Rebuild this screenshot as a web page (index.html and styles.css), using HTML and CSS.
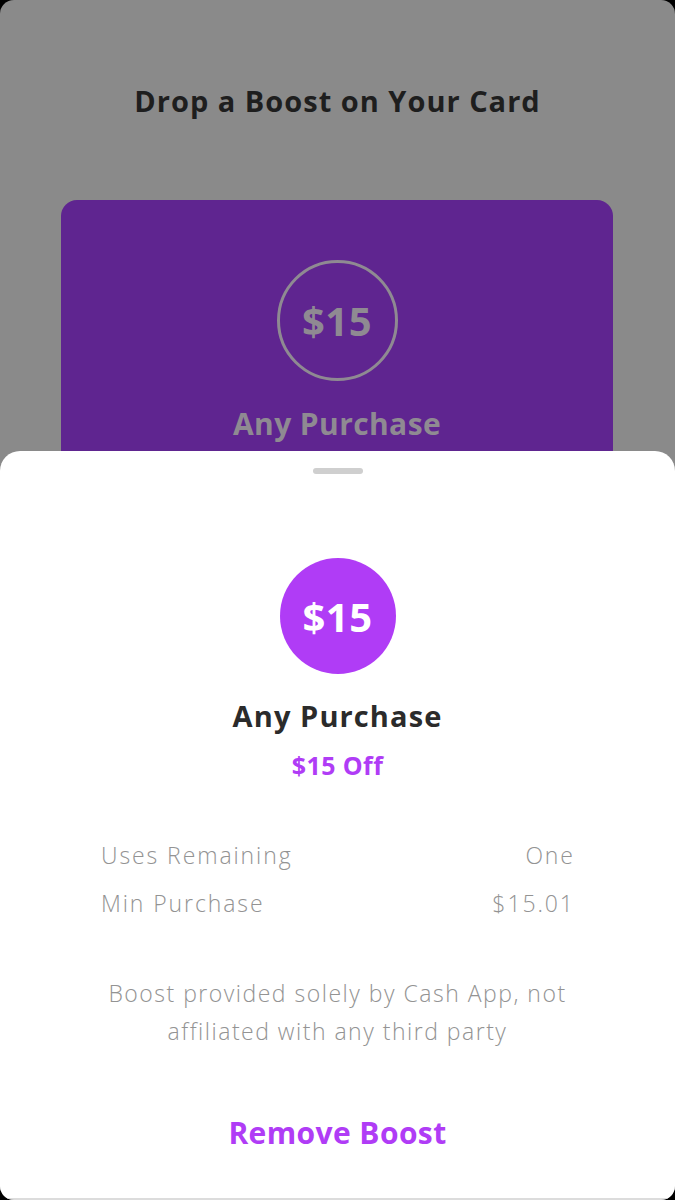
FILE: index.html
```html
<!DOCTYPE html>
<html>
<head>
<meta charset="utf-8">
<link rel="stylesheet" href="styles.css">
</head>
<body>
<div class="screen">
  <h1 class="title">Drop a Boost on Your Card</h1>
  <div class="card">
    <div class="card-circle">$15</div>
    <div class="card-label">Any Purchase</div>
  </div>
  <div class="sheet">
    <div class="handle"></div>
    <div class="badge">$15</div>
    <div class="name">Any Purchase</div>
    <div class="off">$15 Off</div>
    <div class="rows">
      <div class="row"><span>Uses Remaining</span><span>One</span></div>
      <div class="row"><span>Min Purchase</span><span>$15.01</span></div>
    </div>
    <p class="note">Boost provided solely by Cash App, not<br>affiliated with any third party</p>
    <div class="remove">Remove Boost</div>
  </div>
</div>
</body>
</html>
```
FILE: styles.css
```css
html, body {
  margin: 0;
  padding: 0;
  background: #000;
}
.screen {
  position: relative;
  width: 675px;
  height: 1200px;
  background: #8a8a8a;
  border-radius: 14px;
  overflow: hidden;
  font-family: "Open Sans", Lato, sans-serif;
}
.title {
  margin: 0;
  padding-top: 83px;
  font-size: 29px;
  line-height: 36px;
  font-weight: 700;
  letter-spacing: 1px;
  color: #1e1e1e;
  text-align: center;
}
.card {
  margin: 81px 0 0 61px;
  width: 552px;
  height: 420px;
  background: #5f2590;
  border-radius: 16px;
  padding-top: 60px;
  box-sizing: border-box;
  display: flex;
  flex-direction: column;
  align-items: center;
}
.card-circle {
  width: 121px;
  height: 121px;
  box-sizing: border-box;
  border: 3px solid #8f8a92;
  border-radius: 50%;
  display: flex;
  align-items: center;
  justify-content: center;
  color: #8f8a92;
  font-size: 40px;
  font-weight: 700;
  letter-spacing: 0.5px;
}
.card-label {
  margin-top: 25px;
  font-size: 30px;
  line-height: 36px;
  font-weight: 700;
  letter-spacing: 0.4px;
  color: #8f8a92;
}
.sheet {
  position: absolute;
  left: 0;
  right: 0;
  top: 451px;
  bottom: 0;
  background: #fff;
  border-radius: 20px 20px 0 0;
  border-bottom: 2px solid #dcdcdc;
  display: flex;
  flex-direction: column;
  align-items: center;
}
.handle {
  margin-top: 17px;
  width: 50px;
  height: 6px;
  border-radius: 3px;
  background: #cfcfcf;
}
.badge {
  margin-top: 84px;
  width: 116px;
  height: 116px;
  border-radius: 50%;
  background: #b03cf6;
  color: #fff;
  display: flex;
  align-items: center;
  justify-content: center;
  font-size: 40px;
  font-weight: 700;
  letter-spacing: 0.5px;
}
.name {
  margin-top: 24px;
  font-size: 29px;
  line-height: 36px;
  font-weight: 700;
  letter-spacing: 1.1px;
  color: #2b2b2b;
}
.off {
  margin-top: 16px;
  font-size: 25px;
  line-height: 30px;
  font-weight: 700;
  letter-spacing: 0.4px;
  color: #b03cf6;
}
.rows {
  margin-top: 60px;
  align-self: stretch;
  padding: 0 102px 0 101px;
  display: flex;
  flex-direction: column;
  gap: 18px;
}
.row {
  display: flex;
  justify-content: space-between;
  font-size: 23px;
  line-height: 30px;
  font-weight: 300;
  letter-spacing: 1.9px;
  color: #939393;
}
.row span:last-child {
  margin-right: -1.9px;
}
.note {
  margin: 56px 0 0;
  font-size: 23px;
  line-height: 38px;
  font-weight: 300;
  letter-spacing: 1.5px;
  color: #939393;
  text-align: center;
}
.remove {
  margin-top: 65px;
  font-size: 30px;
  line-height: 36px;
  font-weight: 700;
  letter-spacing: 0.4px;
  color: #b03cf6;
}
```
